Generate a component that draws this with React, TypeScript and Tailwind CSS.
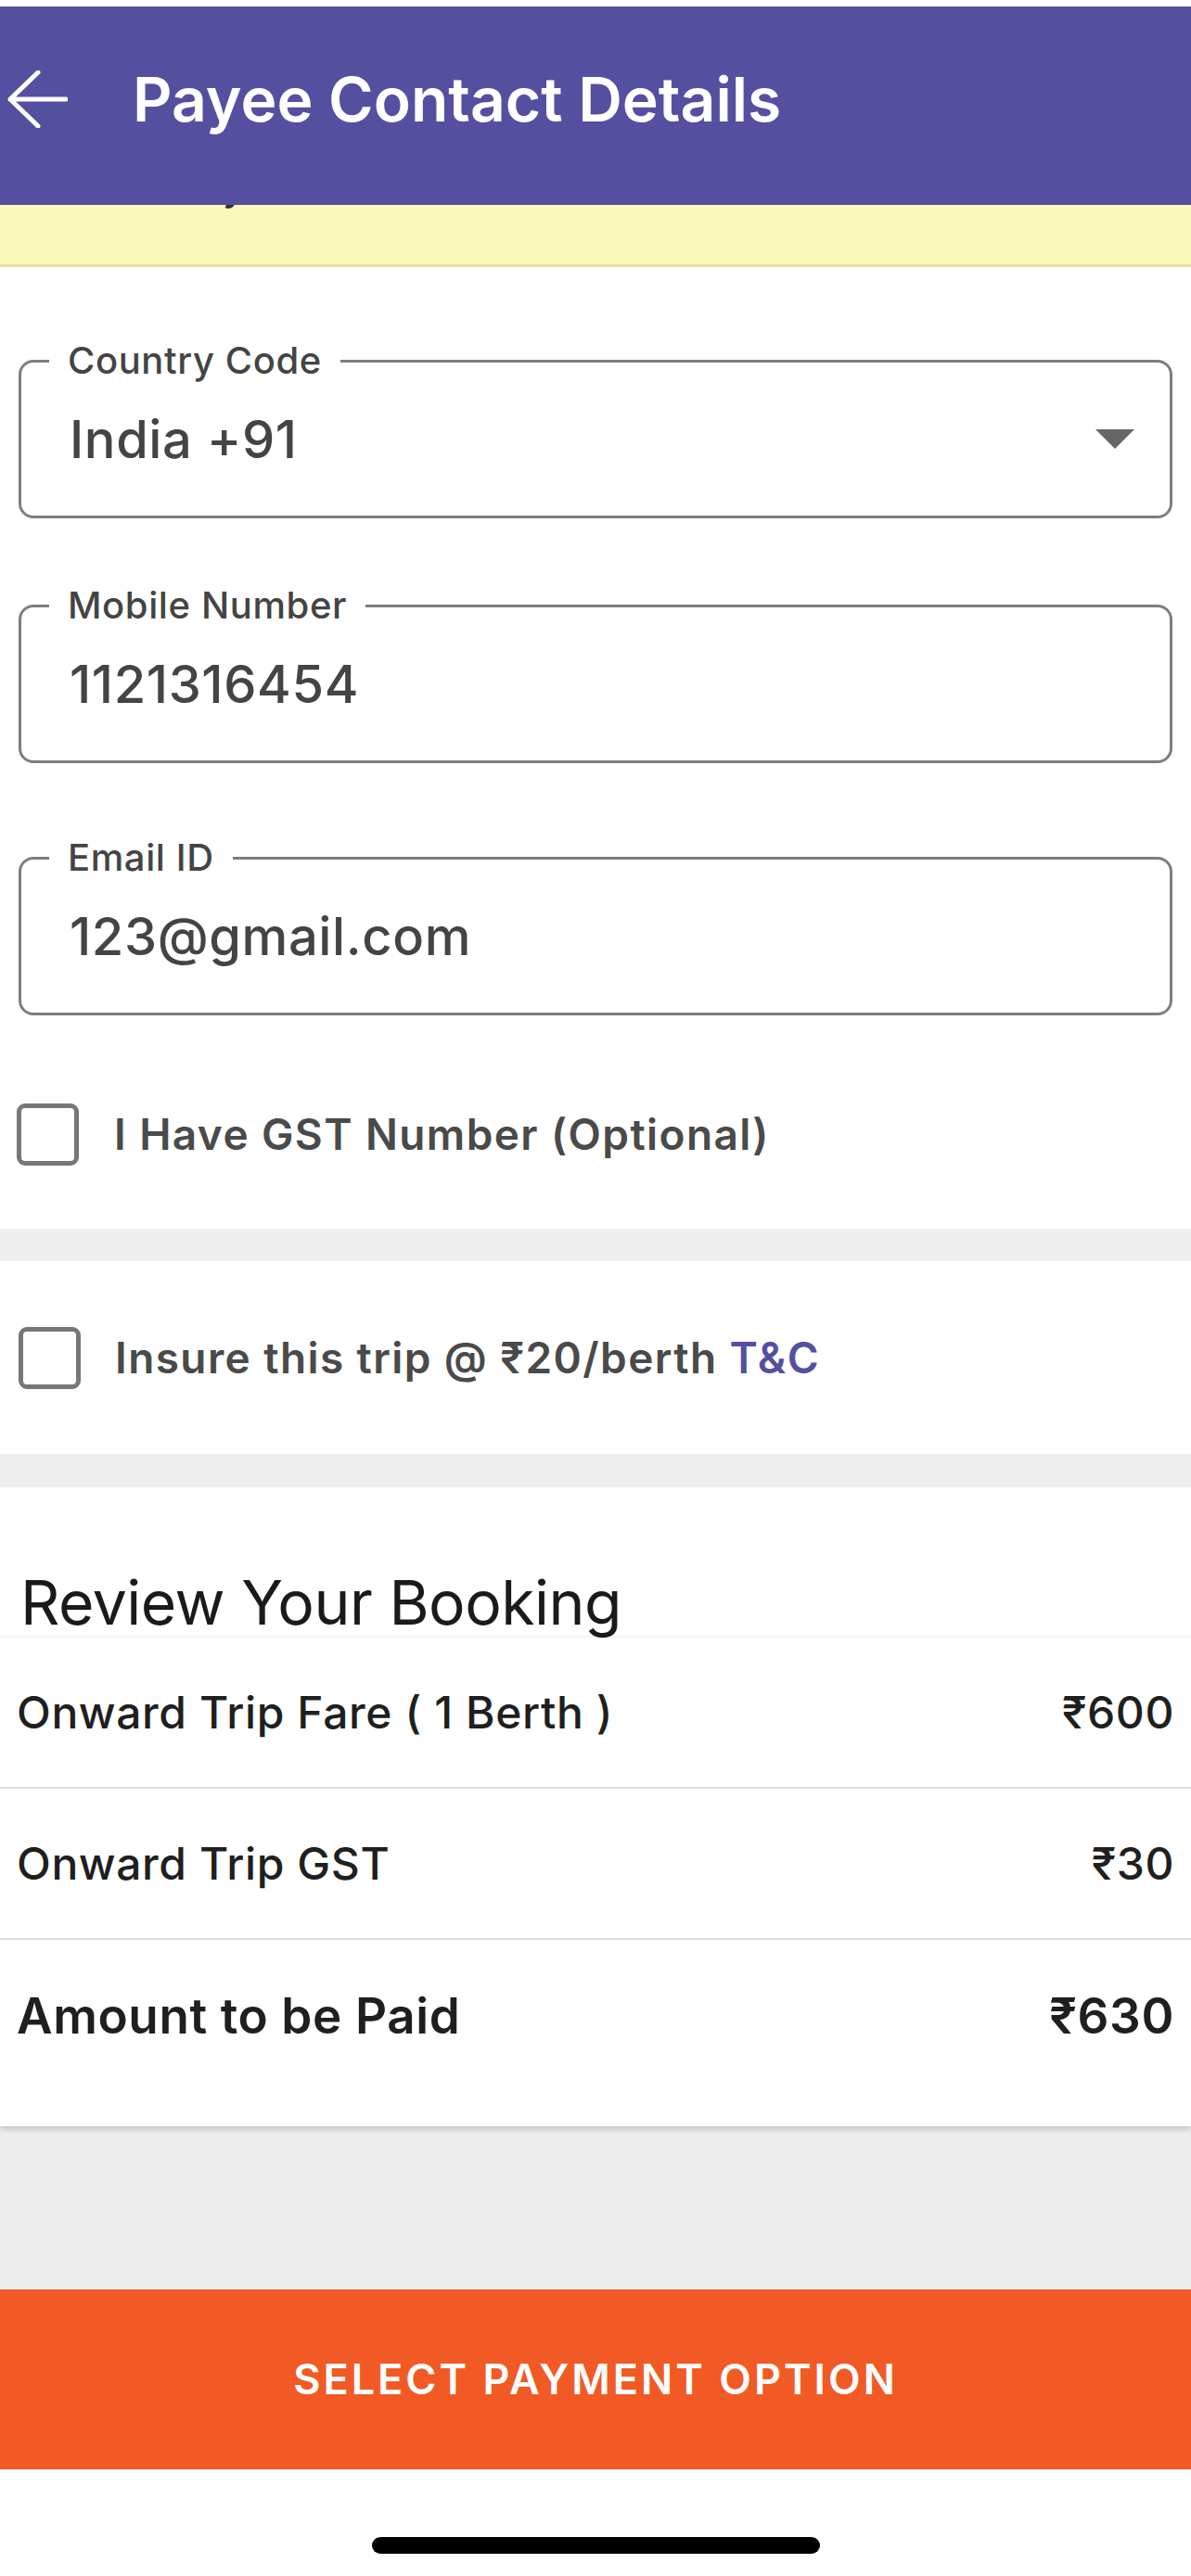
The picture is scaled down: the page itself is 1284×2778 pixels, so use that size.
import React from "react";

function BackArrow() {
  return (
    <svg width="66" height="62" viewBox="0 0 66 62" fill="none">
      <path d="M64 31H4M34 2L4 31l30 29" stroke="#fff" strokeWidth="5" strokeLinecap="round" strokeLinejoin="round" />
    </svg>
  );
}

function OutlinedField({ label, value, select, className }: { label: string; value: string; select?: boolean; className?: string }) {
  return (
    <div
      className={`relative mx-[20px] h-[171px] rounded-[16px] border-[3px] border-[#7e7e7e] flex items-center pl-[52px] pr-[38px] ${className ?? ""}`}
    >
      <span className="absolute left-[30px] top-[-2px] -translate-y-1/2 bg-white px-[20px] text-[40px] leading-[44px] font-medium text-[#444] tracking-[0.6px]">
        {label}
      </span>
      <span className="flex-1 text-[56px] font-medium text-[#444] tracking-[0.6px]">{value}</span>
      {select && (
        <svg width="42" height="21" viewBox="0 0 42 21">
          <path d="M0 0h42L21 21z" fill="#666" />
        </svg>
      )}
    </div>
  );
}

function Checkbox() {
  return <div className="w-[67px] h-[67px] shrink-0 rounded-[9px] border-[5px] border-[#777]" />;
}

function FareRow({ label, amount, bold }: { label: string; amount: string; bold?: boolean }) {
  return (
    <div
      className={`flex justify-between px-[18px] text-[#1f1f1f] ${
        bold
          ? "h-[201px] items-start pt-[56px] text-[53px] font-semibold tracking-[0.6px]"
          : "h-[161px] items-center text-[48px] font-medium tracking-[0.6px]"
      }`}
    >
      <span className="leading-none">{label}</span>
      <span className="leading-none">{amount}</span>
    </div>
  );
}

export default function App() {
  return (
    <div className="w-full min-h-screen bg-white flex flex-col [font-family:Inter,'Noto_Sans',sans-serif]">
      <div className="h-[7px] bg-white" />
      <header className="relative z-10 h-[214px] bg-[#554FA0] flex items-center pb-[14px]">
        <div className="w-[143px] pl-[7px] flex items-center">
          <BackArrow />
        </div>
        <h1 className="text-[66px] font-semibold text-white tracking-[0px]">Payee Contact Details</h1>
      </header>

      <div className="h-[67px] bg-[#FBF9BA] border-b-[3px] border-[#E5E1A3]">
        <p className="-mt-[46px] pl-[190px] text-[42px] leading-[52px] font-medium text-[#333]">
          Pay within 15 mins to confirm
        </p>
      </div>

      <OutlinedField className="mt-[100px]" label="Country Code" value="India +91" select />
      <OutlinedField className="mt-[93px]" label="Mobile Number" value="1121316454" />
      <OutlinedField className="mt-[101px]" label="Email ID" value="123@gmail.com" />

      <div className="mt-[94px] mb-[67px] flex items-center pl-[18px] gap-[38px]">
        <Checkbox />
        <span className="text-[46px] font-semibold text-[#4a4a4a] tracking-[1.4px]">I Have GST Number (Optional)</span>
      </div>

      <div className="h-[35px] bg-[#EEEEEE]" />

      <div className="h-[208px] flex items-center pl-[20px] gap-[37px]">
        <Checkbox />
        <span className="text-[46px] font-semibold text-[#4a4a4a] tracking-[1.4px]">
          Insure this trip @ ₹20/berth <span className="text-[#554FA0]">T&amp;C</span>
        </span>
      </div>

      <div className="h-[36px] bg-[#EEEEEE]" />

      <div className="h-[162px] pt-[91px] pl-[22px]">
        <h2 className="text-[66px] leading-[66px] font-normal text-[#1a1a1a] tracking-[-0.5px]">Review Your Booking</h2>
      </div>

      <div className="relative bg-white shadow-[0_3px_6px_rgba(0,0,0,0.18),0_-2px_4px_rgba(0,0,0,0.03)]">
        <FareRow label="Onward Trip Fare ( 1 Berth )" amount="₹600" />
        <div className="h-[2px] bg-[#dddddd]" />
        <FareRow label="Onward Trip GST" amount="₹30" />
        <div className="h-[2px] bg-[#dddddd]" />
        <FareRow label="Amount to be Paid" amount="₹630" bold />
      </div>

      <div className="h-[176px] bg-[#EDEDED]" />

      <button className="h-[194px] w-full bg-[#F15A24] text-white text-[45px] font-semibold tracking-[3px]">
        SELECT PAYMENT OPTION
      </button>

      <div className="h-[118px] bg-white flex justify-center pt-[73px]">
        <div className="w-[483px] h-[18px] rounded-full bg-black" />
      </div>
    </div>
  );
}
